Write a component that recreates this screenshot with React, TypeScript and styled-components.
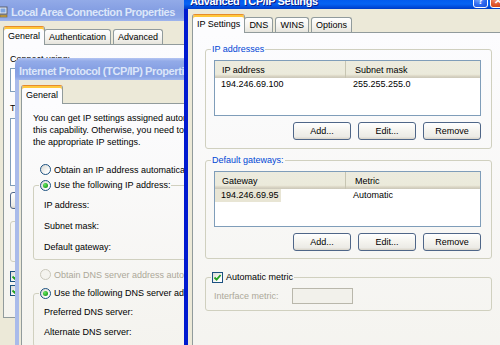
import React from "react";
import styled, { createGlobalStyle, css } from "styled-components";

const Global = createGlobalStyle`
  html, body { margin: 0; padding: 0; width: 500px; height: 345px; overflow: hidden; background: #3a6ea5; }
  body { font-family: "Liberation Sans", Arial, sans-serif; font-size: 9px; color: #000; }
  * { box-sizing: border-box; }
`;

const Desktop = styled.div`
  position: relative;
  width: 500px;
  height: 345px;
  overflow: hidden;
`;

const Win = styled.div<{ $x: number; $y: number; $w: number; $h: number; $z: number; $active?: boolean }>`
  position: absolute;
  left: ${(p) => p.$x}px;
  top: ${(p) => p.$y}px;
  width: ${(p) => p.$w}px;
  height: ${(p) => p.$h}px;
  z-index: ${(p) => p.$z};
  display: flex;
  flex-direction: column;
  padding: 0 4px 4px;
  border-radius: 7px 7px 0 0;
  overflow: hidden;
  background: ${(p) => (p.$active ? "linear-gradient(90deg, #0019cf, #0c4fe0 30%, #1a63ec 70%, #0a45d8)" : "#a9bbea")};
`;

const TitleBar = styled.div<{ $h: number; $active?: boolean; $padTop: number }>`
  flex: none;
  height: ${(p) => p.$h}px;
  margin: 0 -4px;
  padding: ${(p) => p.$padTop}px 8px 0 ${(p) => (p.$active ? 6 : 4)}px;
  display: flex;
  align-items: center;
  gap: 2px;
  background: ${(p) =>
    p.$active
      ? "linear-gradient(#3d95ff 0%, #0a5fe8 14%, #0055ea 50%, #0663f4 80%, #0047d6 94%, #003cc4 100%)"
      : "linear-gradient(#b4c5f2 0%, #93abe8 14%, #859fe3 55%, #8aa4e6 85%, #9fb5ec 100%)"};
`;

const TitleText = styled.span<{ $active?: boolean }>`
  font-family: "Liberation Sans", Arial, sans-serif;
  font-weight: bold;
  font-size: 11px;
  line-height: 12px;
  letter-spacing: -0.4px;
  white-space: nowrap;
  color: ${(p) => (p.$active ? "#ffffff" : "#dce6f9")};
  text-shadow: ${(p) => (p.$active ? "1px 1px 0 #0a1883" : "none")};
  ${(p) => p.$active && css`align-self: flex-end; margin-bottom: 2px;`}
`;

const CapButtons = styled.div`
  margin-left: auto;
  align-self: flex-end;
  margin-bottom: 1px;
  display: flex;
  gap: 2px;
`;

const CapButton = styled.div<{ $close?: boolean }>`
  width: 15px;
  height: 15px;
  border: 1px solid #fff;
  border-radius: 3px;
  display: flex;
  align-items: center;
  justify-content: center;
  color: #fff;
  font-weight: bold;
  font-size: 10px;
  background: ${(p) =>
    p.$close
      ? "radial-gradient(circle at 35% 30%, #f3a58b, #e0552b 55%, #c03a14)"
      : "radial-gradient(circle at 35% 30%, #8cb5ff, #2f6af0 55%, #1a4ed8)"};
`;

const Body = styled.div<{ $pad: string }>`
  flex: 1;
  min-height: 0;
  display: flex;
  flex-direction: column;
  background: #ece9d8;
  padding: ${(p) => p.$pad};
`;

const TabStrip = styled.div`
  flex: none;
  height: 18px;
  display: flex;
  align-items: flex-end;
  padding-left: 2px;
  position: relative;
  z-index: 2;
  margin-bottom: -1px;
`;

const Tab = styled.div<{ $sel?: boolean }>`
  flex: none;
  height: ${(p) => (p.$sel ? 19 : 15)}px;
  padding: 0 4px;
  margin: ${(p) => (p.$sel ? "0 -1px 0 -2px" : "0 2px 1px 0")};
  border: 1px solid #919b9c;
  border-bottom: none;
  border-radius: 3px 3px 0 0;
  display: flex;
  align-items: center;
  justify-content: center;
  white-space: nowrap;
  position: relative;
  background: ${(p) => (p.$sel ? "#fcfcfe" : "linear-gradient(#ffffff, #f4f3ef 60%, #e6e4dc)")};
  ${(p) =>
    p.$sel &&
    css`
      border-top: 1px solid #e68b2c;
      box-shadow: inset 0 2px 0 #ffc83c;
      padding-bottom: 1px;
      z-index: 3;
    `}
`;

const TabPage = styled.div<{ $pad: string }>`
  flex: 1;
  min-height: 0;
  display: flex;
  flex-direction: column;
  border: 1px solid #919b9c;
  background: linear-gradient(#fcfcfe, #f4f3ee);
  padding: ${(p) => p.$pad};
  position: relative;
  z-index: 1;
`;

const Text = styled.div<{ $mt?: number; $dis?: boolean }>`
  line-height: 12px;
  white-space: nowrap;
  margin-top: ${(p) => p.$mt ?? 0}px;
  color: ${(p) => (p.$dis ? "#aca899" : "#000")};
`;

const Group = styled.fieldset<{ $mt?: number }>`
  margin: ${(p) => p.$mt ?? 0}px 0 0 0;
  padding: 0;
  min-width: 0;
  border: 1px solid #d0d0bf;
  border-radius: 3px;
  flex: none;
`;

const Legend = styled.legend`
  margin-left: 5px;
  padding: 0 1px;
  height: 12px;
  line-height: 12px;
`;

const LegendInner = styled.span<{ $blue?: boolean }>`
  display: flex;
  align-items: center;
  gap: 3px;
  height: 12px;
  white-space: nowrap;
  color: ${(p) => (p.$blue ? "#0046d5" : "#000")};
`;

const GroupInner = styled.div<{ $pad: string; $gap?: number }>`
  padding: ${(p) => p.$pad};
  display: flex;
  flex-direction: column;
  gap: ${(p) => p.$gap ?? 0}px;
`;

const Radio = styled.span<{ $on?: boolean; $dis?: boolean }>`
  flex: none;
  width: 11px;
  height: 11px;
  border-radius: 50%;
  position: relative;
  border: 1px solid ${(p) => (p.$dis ? "#cac8bb" : "#1c5180")};
  background: ${(p) => (p.$dis ? "#f4f3ee" : "linear-gradient(135deg, #d8d8d2, #ffffff 80%)")};
  ${(p) =>
    p.$on &&
    css`
      &::after {
        content: "";
        position: absolute;
        left: 2px;
        top: 2px;
        width: 5px;
        height: 5px;
        border-radius: 50%;
        background: radial-gradient(circle at 35% 35%, #66e862, #21a121 70%);
      }
    `}
`;

const CheckBox = styled.span`
  flex: none;
  width: 11px;
  height: 11px;
  border: 1px solid #1c5180;
  background: linear-gradient(135deg, #dcdcd7, #ffffff 80%);
  display: flex;
  align-items: center;
  justify-content: center;
`;

const OptionRow = styled.div<{ $mt?: number; $ml?: number; $dis?: boolean }>`
  display: flex;
  align-items: center;
  gap: 3px;
  height: 12px;
  white-space: nowrap;
  margin-top: ${(p) => p.$mt ?? 0}px;
  margin-left: ${(p) => p.$ml ?? 0}px;
  color: ${(p) => (p.$dis ? "#aca899" : "#000")};
`;

const ListView = styled.div<{ $h: number }>`
  flex: none;
  height: ${(p) => p.$h}px;
  border: 1px solid #7f9db9;
  background: #fff;
  display: flex;
  flex-direction: column;
  overflow: hidden;
`;

const LVHeader = styled.div`
  flex: none;
  height: 17px;
  display: grid;
  grid-template-columns: 131px 1fr;
  background: linear-gradient(#ecebde 0%, #ebeadb 78%, #e2decd 84%, #d6d2c2 91%, #cbc7b8 100%);
`;

const LVHeadCell = styled.div<{ $pl: number; $div?: boolean }>`
  display: flex;
  align-items: center;
  padding-left: ${(p) => p.$pl}px;
  white-space: nowrap;
  border-right: ${(p) => (p.$div ? "1px solid #c7c5b2" : "none")};
`;

const LVRow = styled.div`
  flex: none;
  height: 13px;
  display: grid;
  grid-template-columns: 131px 1fr;
  align-items: center;
`;

const LVCell = styled.div<{ $pl: number }>`
  padding-left: ${(p) => p.$pl}px;
  white-space: nowrap;
  line-height: 13px;
`;

const SelLabel = styled.span`
  display: inline-block;
  background: #e8e5d4;
  padding: 0 2px 0 6px;
  line-height: 13px;
`;

const ButtonRow = styled.div<{ $mt: number; $gap?: number; $justify?: string }>`
  display: flex;
  justify-content: ${(p) => p.$justify ?? "flex-end"};
  gap: ${(p) => p.$gap ?? 7}px;
  margin-top: ${(p) => p.$mt}px;
  flex: none;
`;

const Button = styled.div<{ $w: number; $h?: number }>`
  width: ${(p) => p.$w}px;
  height: ${(p) => p.$h ?? 18}px;
  border: 1px solid #4f6688;
  border-radius: 3px;
  background: linear-gradient(#ffffff, #f4f3ee 50%, #ecebe6 85%, #d8d3c8);
  display: flex;
  align-items: center;
  justify-content: center;
  white-space: nowrap;
`;

const FieldRow = styled.div`
  display: flex;
  align-items: center;
  height: 16px;
`;

const FieldLabel = styled.span<{ $w: number; $dis?: boolean }>`
  width: ${(p) => p.$w}px;
  flex: none;
  white-space: nowrap;
  color: ${(p) => (p.$dis ? "#aca899" : "#000")};
`;

const DisabledInput = styled.div`
  width: 61px;
  height: 16px;
  border: 1px solid #b9b7ab;
  background: #f2f1eb;
`;

const BoxField = styled.div<{ $h: number; $mt?: number }>`
  flex: none;
  height: ${(p) => p.$h}px;
  margin-top: ${(p) => p.$mt ?? 0}px;
  border: 1px solid #7f9db9;
  background: #fff;
  padding: 2px 4px;
  display: flex;
  flex-direction: column;
  gap: 1px;
`;

const SmallCheckRow = styled.div<{ $mt?: number }>`
  display: flex;
  align-items: center;
  gap: 4px;
  height: 11px;
  white-space: nowrap;
  margin-top: ${(p) => p.$mt ?? 0}px;
`;

const Check = () => (
  <svg width="9" height="9" viewBox="0 0 9 9">
    <path d="M1.5 4.5 L3.6 6.6 L7.6 2" fill="none" stroke="#21a121" strokeWidth="1.8" />
  </svg>
);

const NetIcon = () => (
  <svg width="11" height="12" viewBox="0 0 11 12">
    <rect x="1" y="1" width="8" height="7" fill="#e8ecf4" stroke="#5a6070" strokeWidth="1" />
    <rect x="2.5" y="2.5" width="5" height="4" fill="#7fa6e0" />
    <rect x="2" y="9" width="7" height="2" fill="#c9a44a" stroke="#806420" strokeWidth="0.6" />
  </svg>
);

export default function App() {
  return (
    <>
      <Global />
      <Desktop>
        {/* Local Area Connection Properties */}
        <Win $x={-6} $y={-4} $w={240} $h={360} $z={1}>
          <TitleBar $h={25} $padTop={6}>
            <NetIcon />
            <TitleText>Local Area Connection Properties</TitleText>
          </TitleBar>
          <Body $pad="6px 5px 10px 5px">
            <TabStrip>
              <Tab $sel>General</Tab>
              <Tab>Authentication</Tab>
              <Tab>Advanced</Tab>
            </TabStrip>
            <TabPage $pad="8px 6px">
              <Text>Connect using:</Text>
              <BoxField $h={24} $mt={3}>
                <Text>Intel(R) PRO/100 VE Network Connection</Text>
              </BoxField>
              <Text $mt={10}>This connection uses the following items:</Text>
              <BoxField $h={68} $mt={4}>
                <SmallCheckRow><CheckBox><Check /></CheckBox>Client for Microsoft Networks</SmallCheckRow>
                <SmallCheckRow><CheckBox><Check /></CheckBox>File and Printer Sharing</SmallCheckRow>
                <SmallCheckRow><CheckBox><Check /></CheckBox>QoS Packet Scheduler</SmallCheckRow>
                <SmallCheckRow><CheckBox><Check /></CheckBox>Internet Protocol (TCP/IP)</SmallCheckRow>
              </BoxField>
              <ButtonRow $mt={6} $justify="flex-start">
                <Button $w={60} $h={17}>Install...</Button>
                <Button $w={60} $h={17}>Uninstall</Button>
              </ButtonRow>
              <Group $mt={6}>
                <Legend><LegendInner $blue>Description</LegendInner></Legend>
                <GroupInner $pad="2px 6px 20px">
                  <Text>Transmission Control Protocol/Internet Protocol.</Text>
                </GroupInner>
              </Group>
              <SmallCheckRow $mt={9}><CheckBox><Check /></CheckBox>Show icon in notification area when connected</SmallCheckRow>
              <SmallCheckRow $mt={3}><CheckBox><Check /></CheckBox>Notify me when this connection has limited connectivity</SmallCheckRow>
            </TabPage>
            <ButtonRow $mt={7}>
              <Button $w={58} $h={17}>OK</Button>
              <Button $w={58} $h={17}>Cancel</Button>
            </ButtonRow>
          </Body>
        </Win>

        {/* Internet Protocol (TCP/IP) Properties */}
        <Win $x={15} $y={58} $w={300} $h={300} $z={2}>
          <TitleBar $h={22} $padTop={3}>
            <TitleText>Internet Protocol (TCP/IP) Properties</TitleText>
          </TitleBar>
          <Body $pad="6px 2px 0 2px">
            <TabStrip>
              <Tab $sel>General</Tab>
            </TabStrip>
            <TabPage $pad="8px 11px">
              <Text>You can get IP settings assigned automatically if your network supports</Text>
              <Text>this capability. Otherwise, you need to ask your network administrator for</Text>
              <Text>the appropriate IP settings.</Text>
              <OptionRow $mt={16} $ml={7}>
                <Radio />
                Obtain an IP address automatically
              </OptionRow>
              <Group $mt={4}>
                <Legend>
                  <LegendInner>
                    <Radio $on />
                    Use the following IP address:
                  </LegendInner>
                </Legend>
                <GroupInner $pad="8px 10px 6px" $gap={9}>
                  <Text>IP address:</Text>
                  <Text>Subnet mask:</Text>
                  <Text>Default gateway:</Text>
                </GroupInner>
              </Group>
              <OptionRow $mt={9} $ml={7} $dis>
                <Radio $dis />
                Obtain DNS server address automatically
              </OptionRow>
              <Group $mt={7}>
                <Legend>
                  <LegendInner>
                    <Radio $on />
                    Use the following DNS server addresses:
                  </LegendInner>
                </Legend>
                <GroupInner $pad="7px 10px 8px" $gap={8}>
                  <Text>Preferred DNS server:</Text>
                  <Text>Alternate DNS server:</Text>
                </GroupInner>
              </Group>
            </TabPage>
          </Body>
        </Win>

        {/* Advanced TCP/IP Settings */}
        <Win $x={184} $y={-16} $w={329} $h={400} $z={3} $active>
          <TitleBar $h={25} $padTop={0} $active>
            <TitleText $active>Advanced TCP/IP Settings</TitleText>
            <CapButtons>
              <CapButton>?</CapButton>
              <CapButton $close>✕</CapButton>
            </CapButtons>
          </TitleBar>
          <Body $pad="6px 4px 0 4px">
            <TabStrip>
              <Tab $sel>IP Settings</Tab>
              <Tab>DNS</Tab>
              <Tab>WINS</Tab>
              <Tab>Options</Tab>
            </TabStrip>
            <TabPage $pad="10px 12px">
              <Group>
                <Legend><LegendInner $blue>IP addresses</LegendInner></Legend>
                <GroupInner $pad="5px 10px 8px 8px">
                  <ListView $h={56}>
                    <LVHeader>
                      <LVHeadCell $pl={7} $div>IP address</LVHeadCell>
                      <LVHeadCell $pl={9}>Subnet mask</LVHeadCell>
                    </LVHeader>
                    <LVRow>
                      <LVCell $pl={6}>194.246.69.100</LVCell>
                      <LVCell $pl={7}>255.255.255.0</LVCell>
                    </LVRow>
                  </ListView>
                  <ButtonRow $mt={6}>
                    <Button $w={58}>Add...</Button>
                    <Button $w={58}>Edit...</Button>
                    <Button $w={58}>Remove</Button>
                  </ButtonRow>
                </GroupInner>
              </Group>
              <Group $mt={5}>
                <Legend><LegendInner $blue>Default gateways:</LegendInner></Legend>
                <GroupInner $pad="5px 10px 7px 8px">
                  <ListView $h={56}>
                    <LVHeader>
                      <LVHeadCell $pl={7} $div>Gateway</LVHeadCell>
                      <LVHeadCell $pl={9}>Metric</LVHeadCell>
                    </LVHeader>
                    <LVRow>
                      <LVCell $pl={0}><SelLabel>194.246.69.95</SelLabel></LVCell>
                      <LVCell $pl={7}>Automatic</LVCell>
                    </LVRow>
                  </ListView>
                  <ButtonRow $mt={6}>
                    <Button $w={58}>Add...</Button>
                    <Button $w={58}>Edit...</Button>
                    <Button $w={58}>Remove</Button>
                  </ButtonRow>
                </GroupInner>
              </Group>
              <Group $mt={12}>
                <Legend>
                  <LegendInner>
                    <CheckBox><Check /></CheckBox>
                    Automatic metric
                  </LegendInner>
                </Legend>
                <GroupInner $pad="5px 10px 6px 8px">
                  <FieldRow>
                    <FieldLabel $w={78} $dis>Interface metric:</FieldLabel>
                    <DisabledInput />
                  </FieldRow>
                </GroupInner>
              </Group>
            </TabPage>
          </Body>
        </Win>
      </Desktop>
    </>
  );
}
